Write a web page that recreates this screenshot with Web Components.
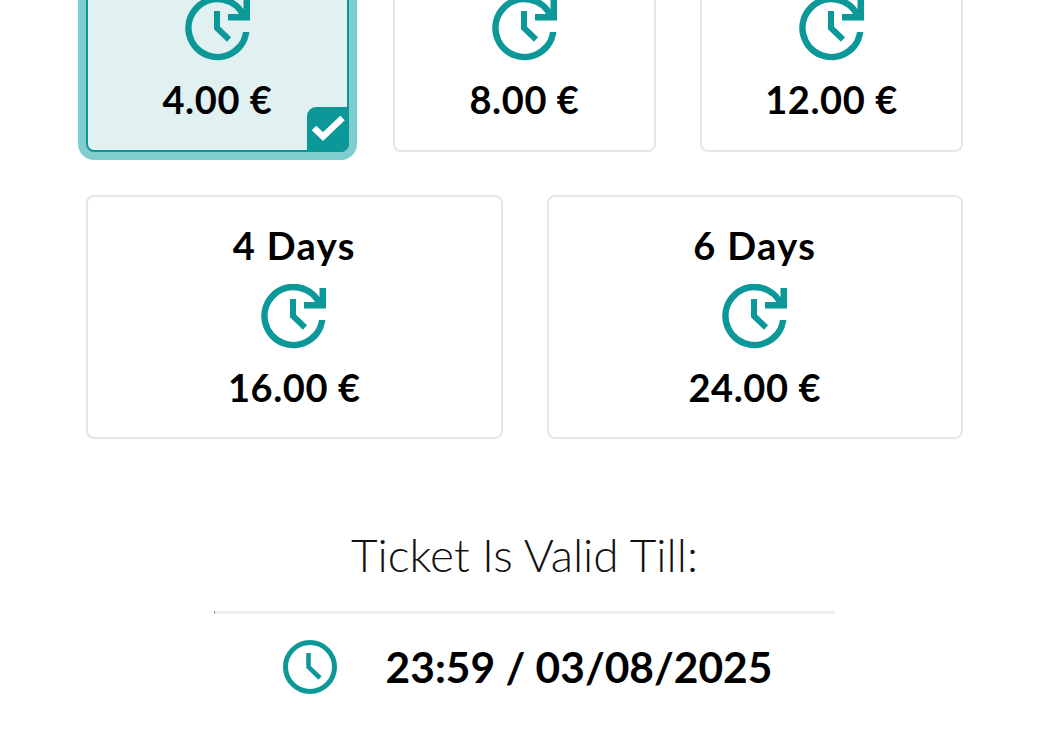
<!DOCTYPE html>
<html>
<head>
<meta charset="utf-8">
<style>
  html, body { margin: 0; background: #fff; overflow: hidden; height: 750px; }
  body { font-family: Lato, "Open Sans", sans-serif; color: #000; }
</style>
</head>
<body>
<ticket-page>
  <card-row>
    <ticket-card class="cut" selected><span slot="price">4.00 €</span></ticket-card>
    <ticket-card class="cut"><span slot="price">8.00 €</span></ticket-card>
    <ticket-card class="cut"><span slot="price">12.00 €</span></ticket-card>
  </card-row>
  <card-row>
    <ticket-card><span slot="label">4 Days</span><span slot="price">16.00 €</span></ticket-card>
    <ticket-card><span slot="label">6 Days</span><span slot="price">24.00 €</span></ticket-card>
  </card-row>
  <valid-till date="23:59 / 03/08/2025">Ticket Is Valid Till:</valid-till>
</ticket-page>
<script>
class TicketPage extends HTMLElement {
  constructor() {
    super();
    this.attachShadow({ mode: "open" }).innerHTML = `
      <style>
        :host { display: flex; flex-direction: column; gap: 43px; padding: 0 86px; margin-top: -20px; }
      </style>
      <slot></slot>`;
  }
}

class CardRow extends HTMLElement {
  constructor() {
    super();
    this.attachShadow({ mode: "open" }).innerHTML = `
      <style>
        :host { display: flex; gap: 44px; }
        ::slotted(*) { flex: 1 1 0; }
      </style>
      <slot></slot>`;
  }
}

class TicketCard extends HTMLElement {
  constructor() {
    super();
    this.attachShadow({ mode: "open" }).innerHTML = `
      <style>
        :host {
          position: relative;
          display: flex;
          flex-direction: column;
          align-items: center;
          justify-content: flex-end;
          box-sizing: border-box;
          height: 244px;
          padding-bottom: 27px;
          border: 2px solid #e6e6e6;
          border-radius: 8px;
          background: #fff;
        }
        :host(.cut) { height: 172px; padding-bottom: 28px; }
        :host([selected]) {
          border-color: #0c9898;
          background: #e1f1f2;
          box-shadow: 0 0 0 8px #80cdcd;
        }
        .label { font-size: 38px; font-weight: 700; line-height: 46px; margin-bottom: 16px; letter-spacing: 1.4px; }
        .price { font-size: 38px; font-weight: 700; line-height: 46px; margin-top: 14px; letter-spacing: 0.6px; }
        svg { display: block; width: 66px; height: 66px; }
        .tick {
          display: none;
          position: absolute;
          right: -2px;
          bottom: -2px;
          width: 42px;
          height: 45px;
          border-radius: 9px 0 9px 0;
          background: #0c9898;
        }
        :host([selected]) .tick { display: block; }
        .tick svg { width: 42px; height: 45px; }
      </style>
      <div class="label"><slot name="label"></slot></div>
      <svg viewBox="0 0 66 66" fill="none">
        <defs>
          <clipPath id="gap">
            <rect x="0" y="36" width="66" height="30"/>
            <rect x="0" y="24.5" width="43" height="11.5"/>
            <rect x="0" y="0" width="59" height="24.5"/>
          </clipPath>
        </defs>
        <path d="M61.4 30 A29 29 0 1 1 59.3 21" stroke="#0c9898" stroke-width="6.5" clip-path="url(#gap)"/>
        <path d="M43 18 H58.5 V4 H65 V24.5 H43 Z" fill="#0c9898"/>
        <path d="M32 15 V32 L44 43.5" stroke="#0c9898" stroke-width="6"/>
      </svg>
      <div class="price"><slot name="price"></slot></div>
      <div class="tick">
        <svg viewBox="0 0 42 45" fill="none">
          <path d="M7 21 L16 29.5 L35.5 11" stroke="#fff" stroke-width="6.5"/>
        </svg>
      </div>`;
    if (!this.querySelector('[slot="label"]')) {
      this.shadowRoot.querySelector(".label").remove();
    }
  }
}

class ValidTill extends HTMLElement {
  constructor() {
    super();
    this.attachShadow({ mode: "open" }).innerHTML = `
      <style>
        :host { display: flex; flex-direction: column; align-items: center; margin-top: 45px; }
        .title { font-size: 46px; font-weight: 300; line-height: 56px; color: #111; }
        hr {
          box-sizing: border-box;
          width: 621px;
          height: 3px;
          margin: 28px 0 0;
          border: 0;
          border-left: 1px solid #999;
          background: #eee;
        }
        .when { display: flex; align-items: center; gap: 49px; margin: 26px 0 0 6px; }
        .date { font-size: 42.5px; font-weight: 700; line-height: 54px; }
        svg { display: block; width: 54px; height: 54px; }
      </style>
      <div class="title"><slot></slot></div>
      <hr>
      <div class="when">
        <svg viewBox="0 0 54 54" fill="none">
          <circle cx="27" cy="27" r="24.5" stroke="#0c9898" stroke-width="5"/>
          <path d="M25.5 13 V27 L37 38" stroke="#0c9898" stroke-width="4.5"/>
        </svg>
        <div class="date"></div>
      </div>`;
    this.shadowRoot.querySelector(".date").textContent = this.getAttribute("date");
  }
}

customElements.define("ticket-page", TicketPage);
customElements.define("card-row", CardRow);
customElements.define("ticket-card", TicketCard);
customElements.define("valid-till", ValidTill);
</script>
</body>
</html>
